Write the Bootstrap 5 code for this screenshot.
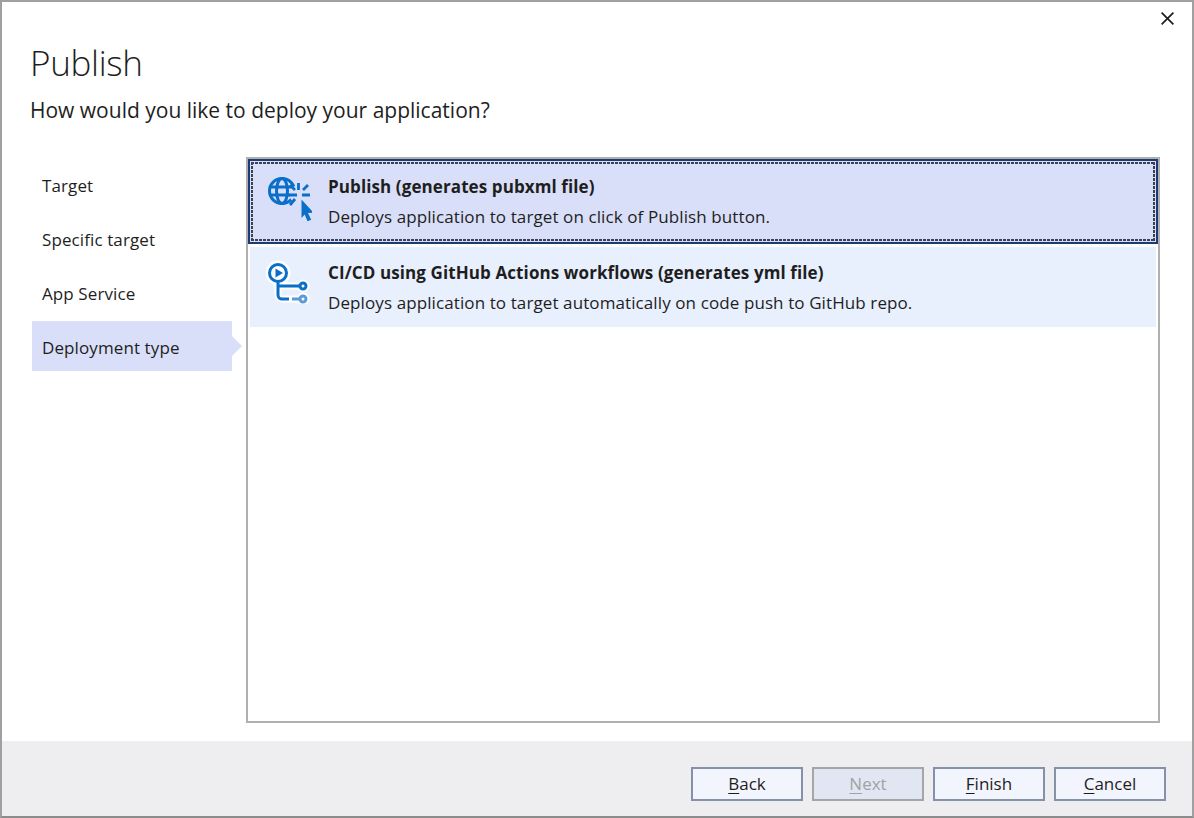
<!DOCTYPE html>
<html lang="en">
<head>
<meta charset="utf-8">
<title>Publish</title>
<link href="https://cdn.jsdelivr.net/npm/bootstrap@5.3.0/dist/css/bootstrap.min.css" rel="stylesheet">
<style>
html,body{height:100%;margin:0;overflow:hidden}
body{font-family:"Open Sans","Noto Sans",sans-serif;color:#1e1e1e;background:#fff}
.win{width:1194px;height:818px;border:2px solid #a0a0a0;border-bottom-color:#8c8c8c;position:relative;background:#fff}
.closex{position:absolute;top:10px;right:18px;width:13px;height:13px;line-height:0}
.head{padding:39px 0 0 28px;height:155px}
.ttl{font-size:35px;font-weight:300;line-height:44px;margin:0;color:#1e1e1e;letter-spacing:-.3px}
.sub{font-size:21px;line-height:28px;margin:11px 0 0;font-weight:400}
.mainrow{height:584px}
.steps{width:244px;padding:0 0 0 30px;flex:none}
.stepi{width:200px;height:50px;margin-bottom:4px;padding:4px 0 0 10px;font-size:17px;letter-spacing:.1px;display:flex;align-items:center;position:relative}
.steps .stepi:first-child{margin-top:2px}
.stepon{background:#d9dff8}
.stepon::after{content:"";position:absolute;left:100%;top:15px;border-left:10px solid #d9dff8;border-top:10px solid transparent;border-bottom:10px solid transparent}
.lbox{width:914px;height:566px;border:2px solid #b0b0b0;padding:0;background:#fff;flex:none}
.opt{display:flex;align-items:center;background:#e8effd}
.opton{height:85px;background:#d9dff8;border:2px solid #1e3a72;padding-left:16px;position:relative}
.opton::before{content:"";position:absolute;inset:1px;pointer-events:none;
 background:
 repeating-linear-gradient(90deg,#3c4152 0 3px,transparent 3px 4px) left top/100% 2px no-repeat,
 repeating-linear-gradient(90deg,#3c4152 0 3px,transparent 3px 4px) left bottom/100% 2px no-repeat,
 repeating-linear-gradient(0deg,#3c4152 0 3px,transparent 3px 4px) left top/2px 100% no-repeat,
 repeating-linear-gradient(0deg,#3c4152 0 3px,transparent 3px 4px) right top/2px 100% no-repeat}
.optoff{height:80px;width:906px;margin:3px 0 0 2px;padding-left:16px}
.ico{width:46px;height:46px;flex:none;margin-right:16px}
.opton .ico{margin-top:-3px}
.optoff .ico{margin-bottom:12px}
.optname{font-size:17px;font-weight:700;line-height:22px;letter-spacing:.1px}
.optdesc{font-size:17px;line-height:22px;margin-top:8px;letter-spacing:.1px}
.optoff .optname{padding-top:1px}
.foot{height:75px;background:#eeeef0;padding:26px 26px 0 0;margin-top:0}
.wbtn{width:112px;height:34px;border:2px solid #8491a8;background:#f2f5fd;border-radius:0;padding:0;font-size:17px;color:#1e1e1e;line-height:30px}
.wbtn:hover{background:#f2f5fd;border-color:#8491a8;color:#1e1e1e}
.wbtn:disabled{background:#e0e7f3;border:2px solid #a5a5a5;color:#a2a2a2;opacity:1}
.wbtn u{text-underline-offset:3px;text-decoration-thickness:1px}
.btnset{gap:9px}
</style>
</head>
<body>
<div class="win d-flex flex-column">
  <div class="closex">
    <svg width="13" height="13" viewBox="0 0 13 13"><path d="M.6.6l11.8 11.8M12.4.6L.6 12.4" stroke="#1e1e1e" stroke-width="1.7" fill="none"/></svg>
  </div>
  <div class="head">
    <h1 class="ttl">Publish</h1>
    <h2 class="sub">How would you like to deploy your application?</h2>
  </div>
  <div class="mainrow d-flex">
    <div class="steps">
      <div class="stepi">Target</div>
      <div class="stepi">Specific target</div>
      <div class="stepi">App Service</div>
      <div class="stepi stepon">Deployment type</div>
    </div>
    <div class="lbox">
      <div class="opt opton">
        <svg class="ico" viewBox="0 0 46 46" aria-hidden="true">
          <g fill="none" stroke="#0a6fc8" stroke-width="3">
            <circle cx="16" cy="14" r="12.500"/>
            <ellipse cx="16" cy="14" rx="5.500" ry="12.500"/>
            <path d="M4 10h25M4 18h25"/>
          </g>
          <circle cx="33" cy="17.500" r="9.500" fill="#d9dff8"/>
          <g stroke="#0a6fc8" stroke-width="2.800" fill="none">
            <path d="M23 18h8M36 18h8M32.500 6v7M24 8l5 5M42 8l-5 5M24 28l5-6"/>
          </g>
          <path d="M35.500 22.500L47.500 35.500l-5.500.5 3.200 6.700-3.700 1.600-2.800-6.800-3.200 3.500z" fill="#0a6fc8"/>
        </svg>
        <div>
          <div class="optname">Publish (generates pubxml file)</div>
          <div class="optdesc">Deploys application to target on click of Publish button.</div>
        </div>
      </div>
      <div class="opt optoff">
        <svg class="ico" viewBox="0 0 46 46" aria-hidden="true">
          <g fill="none" stroke="#fff" stroke-width="7" stroke-linecap="round" stroke-linejoin="round">
            <circle cx="12" cy="15" r="9" fill="#fff"/>
            <path d="M12 24v13a4 4 0 0 0 4 4h21M12 28h25"/>
            <circle cx="37" cy="28" r="3"/>
            <circle cx="37" cy="41" r="3"/>
          </g>
          <g fill="none" stroke="#0a6fc8" stroke-width="3">
            <circle cx="12" cy="15" r="8.500"/>
            <path d="M12 23.500V37a4 4 0 0 0 4 4h7M12 28h21"/>
            <circle cx="37" cy="28" r="3"/>
            <circle cx="37" cy="41" r="3" stroke="#5b9bd8"/>
            <path d="M26 41h8" stroke="#5b9bd8"/>
          </g>
          <path d="M9.500 10.500l7.500 4.500-7.500 4.500z" fill="#0a6fc8"/>
        </svg>
        <div>
          <div class="optname">CI/CD using GitHub Actions workflows (generates yml file)</div>
          <div class="optdesc">Deploys application to target automatically on code push to GitHub repo.</div>
        </div>
      </div>
    </div>
  </div>
  <div class="foot d-flex justify-content-end btnset">
    <button type="button" class="btn wbtn"><u>B</u>ack</button>
    <button type="button" class="btn wbtn" disabled><u>N</u>ext</button>
    <button type="button" class="btn wbtn"><u>F</u>inish</button>
    <button type="button" class="btn wbtn"><u>C</u>ancel</button>
  </div>
</div>
<script src="https://cdn.jsdelivr.net/npm/bootstrap@5.3.0/dist/js/bootstrap.bundle.min.js"></script>
</body>
</html>
